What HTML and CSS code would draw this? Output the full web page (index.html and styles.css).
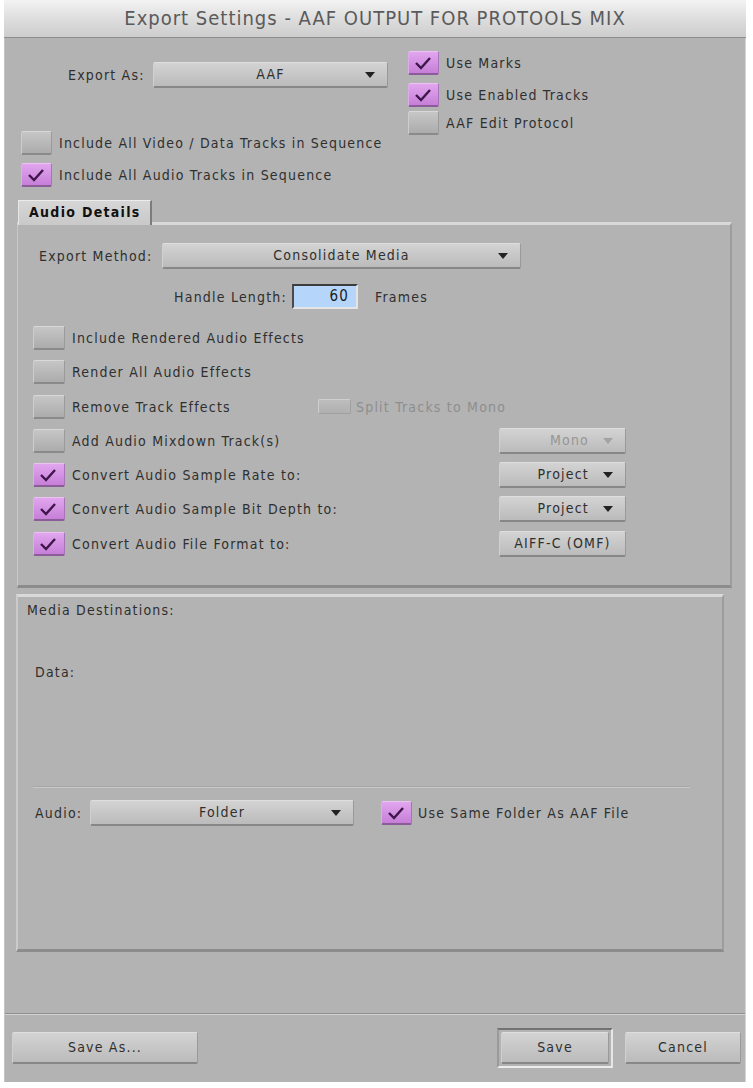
FILE: index.html
```html
<!DOCTYPE html>
<html lang="en">
<head>
    <meta charset="UTF-8">
    <title>Export Settings - AAF OUTPUT FOR PROTOOLS MIX</title>
    <link rel="stylesheet" href="styles.css">
</head>
<body>
    <div class="window">
        <div class="titlebar">Export Settings - AAF OUTPUT FOR PROTOOLS MIX</div>

        <div class="top">
            <div class="top-left">
                <div class="export-as">
                    <span class="export-label">Export As:</span>
                    <div class="dropdown dd-export"><span class="dd-text">AAF</span><span class="arrow"></span></div>
                </div>
                <div class="option include-video"><span class="check"></span><span class="opt-text">Include All Video / Data Tracks in Sequence</span></div>
                <div class="option include-audio">
                    <span class="check on"><svg viewBox="0 0 31 24" width="31" height="24"><path d="M8 12 L13 17 L22 7" /></svg></span>
                    <span class="opt-text">Include All Audio Tracks in Sequence</span>
                </div>
            </div>
            <div class="top-right">
                <div class="option">
                    <span class="check on"><svg viewBox="0 0 31 24" width="31" height="24"><path d="M8 12 L13 17 L22 7" /></svg></span>
                    <span class="opt-text">Use Marks</span>
                </div>
                <div class="option use-enabled">
                    <span class="check on"><svg viewBox="0 0 31 24" width="31" height="24"><path d="M8 12 L13 17 L22 7" /></svg></span>
                    <span class="opt-text">Use Enabled Tracks</span>
                </div>
                <div class="option edit-protocol"><span class="check"></span><span class="opt-text">AAF Edit Protocol</span></div>
            </div>
        </div>

        <div class="tabs"><div class="tab">Audio Details</div></div>

        <div class="panel audio-panel">
            <div class="method-row">
                <span class="method-label">Export Method:</span>
                <div class="dropdown dd-method"><span class="dd-text">Consolidate Media</span><span class="arrow"></span></div>
            </div>
            <div class="handle-row">
                <span class="handle-label">Handle Length:</span>
                <div class="num-input">60</div>
                <span class="frames">Frames</span>
            </div>

            <div class="audio-options">
                <div class="option">
                    <span class="check"></span>
                    <span class="opt-text opt-fixed">Include Rendered Audio Effects</span>
                </div>
                <div class="option">
                    <span class="check"></span>
                    <span class="opt-text opt-fixed">Render All Audio Effects</span>
                </div>
                <div class="option">
                    <span class="check"></span>
                    <span class="opt-text opt-fixed">Remove Track Effects</span>
                    <span class="check small disabled"></span>
                    <span class="opt-text dim">Split Tracks to Mono</span>
                </div>
                <div class="option">
                    <span class="check"></span>
                    <span class="opt-text opt-fixed">Add Audio Mixdown Track(s)</span>
                    <div class="dropdown dd-small disabled"><span class="dd-text">Mono</span><span class="arrow"></span></div>
                </div>
                <div class="option">
                    <span class="check on"><svg viewBox="0 0 31 24" width="31" height="24"><path d="M8 12 L13 17 L22 7" /></svg></span>
                    <span class="opt-text opt-fixed">Convert Audio Sample Rate to:</span>
                    <div class="dropdown dd-small"><span class="dd-text">Project</span><span class="arrow"></span></div>
                </div>
                <div class="option">
                    <span class="check on"><svg viewBox="0 0 31 24" width="31" height="24"><path d="M8 12 L13 17 L22 7" /></svg></span>
                    <span class="opt-text opt-fixed">Convert Audio Sample Bit Depth to:</span>
                    <div class="dropdown dd-small"><span class="dd-text">Project</span><span class="arrow"></span></div>
                </div>
                <div class="option">
                    <span class="check on"><svg viewBox="0 0 31 24" width="31" height="24"><path d="M8 12 L13 17 L22 7" /></svg></span>
                    <span class="opt-text opt-fixed">Convert Audio File Format to:</span>
                    <div class="button btn-format">AIFF-C (OMF)</div>
                </div>
            </div>
        </div>

        <div class="panel media-panel">
            <div class="media-title">Media Destinations:</div>
            <div class="data-label">Data:</div>
            <div class="separator"></div>
            <div class="audio-dest">
                <span class="dest-label">Audio:</span>
                <div class="dropdown dd-folder"><span class="dd-text">Folder</span><span class="arrow"></span></div>
                <div class="option same-folder">
                    <span class="check on"><svg viewBox="0 0 31 24" width="31" height="24"><path d="M8 12 L13 17 L22 7" /></svg></span>
                    <span class="opt-text">Use Same Folder As AAF File</span>
                </div>
            </div>
        </div>

        <div class="footer">
            <div class="button btn-saveas">Save As...</div>
            <div class="default-ring"><div class="button btn-save">Save</div></div>
            <div class="button btn-cancel">Cancel</div>
        </div>
    </div>
</body>
</html>
```

FILE: styles.css
```css
body {
    margin: 0;
    background: #ffffff;
    font-family: "DejaVu Sans Condensed", "Liberation Sans Narrow", "Liberation Sans", sans-serif;
    font-size: 14px;
    letter-spacing: 1.2px;
    color: #2f2f2f;
}
.window {
    box-sizing: border-box;
    margin-left: 4px;
    width: 742px;
    height: 1082px;
    background: #b3b3b3;
    border-left: 1px solid #c4c4c4;
    border-right: 1px solid #d6d6d6;
    display: flex;
    flex-direction: column;
}
.titlebar {
    height: 37px;
    line-height: 37px;
    border-bottom: 1px solid #8e8e8e;
    background: linear-gradient(#f3f3f3, #dcdcdc 55%, #cdcdcd);
    text-align: center;
    font-size: 20px;
    letter-spacing: 1px;
    color: #5a5a5a;
    margin-left: -1px;
    margin-right: -1px;
}

/* checkbox rows */
.option {
    display: flex;
    align-items: center;
    height: 24px;
}
.check {
    box-sizing: border-box;
    flex: none;
    width: 31px;
    height: 24px;
    border-top: 1px solid #d8d8d8;
    border-left: 1px solid #cdcdcd;
    border-bottom: 2px solid #8a8a8a;
    border-right: 1px solid #9a9a9a;
    border-radius: 2px;
    background: linear-gradient(#c6c6c6, #acacac);
}
.check.on {
    border-top-color: #eac3f3;
    border-left-color: #dcaee8;
    border-bottom-color: #8c5c99;
    border-right-color: #a872b6;
    background: linear-gradient(#e1a6ee, #c67fd8);
}
.check svg {
    display: block;
    margin: -1px 0 0 -1px;
}
.check path {
    fill: none;
    stroke: #3e1649;
    stroke-width: 2.4;
}
.check.small {
    width: 33px;
    height: 15px;
    border-bottom-width: 1px;
}
.check.disabled {
    background: linear-gradient(#bdbdbd, #b0b0b0);
    border-color: #cfcfcf #a0a0a0 #a0a0a0 #cfcfcf;
}
.opt-text {
    margin-left: 7px;
    white-space: nowrap;
}
.opt-text.dim {
    margin-left: 5px;
    color: #8e8e8e;
}

/* buttons and popup menus */
.dropdown, .button {
    box-sizing: border-box;
    position: relative;
    height: 26px;
    line-height: 23px;
    border-top: 1px solid #dedede;
    border-left: 1px solid #d0d0d0;
    border-bottom: 2px solid #878787;
    border-right: 1px solid #999999;
    border-radius: 2px;
    background: linear-gradient(#d3d3d3, #bbbbbb);
    text-align: center;
    white-space: nowrap;
}
.arrow {
    position: absolute;
    right: 12px;
    top: 9px;
    width: 0;
    height: 0;
    border-left: 5px solid transparent;
    border-right: 5px solid transparent;
    border-top: 6px solid #222222;
}
.dropdown.disabled {
    color: #969696;
}
.dropdown.disabled .arrow {
    border-top-color: #a3a3a3;
}

/* top area */
.top {
    display: flex;
    height: 149px;
}
.top-left {
    width: 387px;
    padding-left: 16px;
    padding-top: 24px;
}
.export-as {
    display: flex;
    align-items: center;
    padding-left: 47px;
}
.export-label {
    width: 85px;
}
.dd-export {
    width: 235px;
}
.include-video {
    margin-top: 43px;
}
.include-audio {
    margin-top: 8px;
}
.top-right {
    padding-top: 13px;
}
.use-enabled {
    margin-top: 8px;
}
.edit-protocol {
    margin-top: 4px;
}

/* tab + audio details */
.tabs {
    margin-top: 13px;
    padding-left: 13px;
    display: flex;
}
.tab {
    position: relative;
    z-index: 1;
    box-sizing: border-box;
    width: 134px;
    height: 25px;
    margin-bottom: -3px;
    padding-left: 10px;
    line-height: 22px;
    font-weight: bold;
    letter-spacing: 1.3px;
    color: #111111;
    background: linear-gradient(#d6d6d6, #c9c9c9);
    border-top: 1px solid #ececec;
    border-left: 1px solid #e6e6e6;
    border-right: 2px solid #7c7c7c;
}
.panel {
    box-sizing: border-box;
    border-top: 3px solid #d9d9d9;
    border-bottom: 3px solid #8c8c8c;
    border-left: 1px solid #c8c8c8;
    border-right: 2px solid #9d9d9d;
}
.audio-panel {
    margin-left: 12px;
    width: 715px;
    height: 366px;
    padding: 18px 0 0 15px;
}
.method-row {
    display: flex;
    align-items: center;
    padding-left: 6px;
}
.method-label {
    width: 123px;
}
.dd-method {
    width: 359px;
}
.handle-row {
    display: flex;
    align-items: center;
    margin-top: 15px;
    padding-left: 6px;
}
.handle-label {
    width: 248px;
    text-align: right;
}
.num-input {
    box-sizing: border-box;
    width: 66px;
    height: 25px;
    margin-left: 5px;
    padding-right: 7px;
    line-height: 21px;
    text-align: right;
    font-size: 15px;
    color: #1c1c1c;
    background: #b5d5fb;
    border-top: 2px solid #3c3c3c;
    border-left: 2px solid #4a4a4a;
    border-bottom: 2px solid #e4e4e4;
    border-right: 2px solid #e4e4e4;
}
.frames {
    margin-left: 17px;
}
.audio-options {
    display: flex;
    flex-direction: column;
    gap: 10.3px;
    margin-top: 17px;
}
.audio-options .check {
    width: 32px;
}
.audio-options .check.small {
    width: 33px;
}
.opt-fixed {
    width: 246px;
}
.dd-small, .btn-format {
    width: 127px;
    margin-left: 181px;
}
.dd-small {
    text-align: right;
    padding-right: 36px;
}

/* media destinations */
.media-panel {
    margin-top: 6px;
    margin-left: 11px;
    width: 708px;
    height: 358px;
    padding: 6px 0 0 9px;
    border-left-width: 2px;
    border-left-color: #cbcbcb;
}
.media-title {
    line-height: 15px;
}
.data-label {
    margin-top: 47px;
    margin-left: 8px;
    line-height: 15px;
}
.separator {
    margin-top: 106px;
    margin-left: 6px;
    width: 657px;
    height: 1px;
    background: #a6a6a6;
    border-bottom: 1px solid #c9c9c9;
}
.audio-dest {
    display: flex;
    align-items: center;
    margin-top: 12px;
    margin-left: 8px;
}
.dest-label {
    width: 55px;
}
.dd-folder {
    width: 264px;
}
.same-folder {
    margin-left: 27px;
}
.same-folder .opt-text {
    margin-left: 6px;
}

/* footer buttons */
.footer {
    display: flex;
    align-items: center;
    margin-top: 61px;
    flex: 1;
    padding: 0 4px 0 7px;
    border-top: 1px solid #8f8f8f;
    box-shadow: inset 0 1px 0 #d3d3d3;
}
.footer .button {
    height: 32px;
    line-height: 29px;
}
.btn-saveas {
    width: 186px;
}
.default-ring {
    margin-left: auto;
    padding: 2px;
    border-top: 2px solid #727272;
    border-left: 2px solid #9a9a9a;
    border-bottom: 2px solid #ececec;
    border-right: 2px solid #e6e6e6;
}
.btn-save {
    width: 108px;
}
.btn-cancel {
    width: 116px;
    margin-left: 12px;
}
```
